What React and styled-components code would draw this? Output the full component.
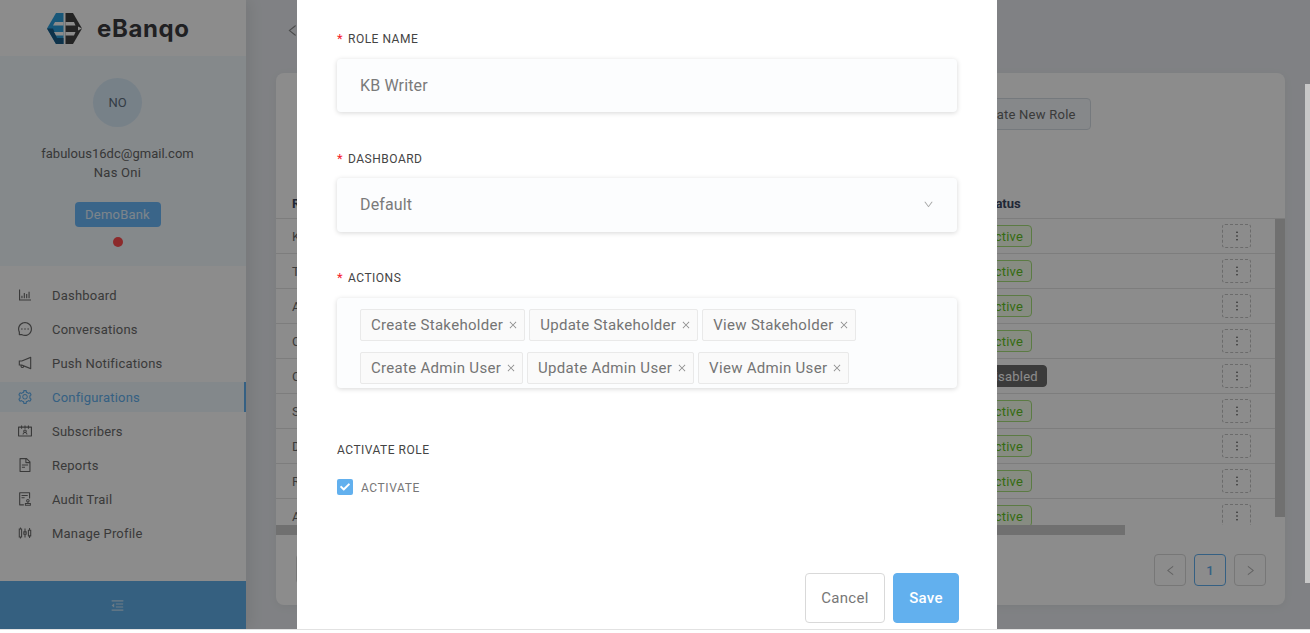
import React from "react";
import styled, { createGlobalStyle } from "styled-components";
import {
  AiOutlineBarChart,
  AiOutlineMessage,
  AiOutlineNotification,
  AiOutlineSetting,
  AiOutlineContacts,
  AiOutlineFileText,
  AiOutlineAudit,
  AiOutlineSliders,
  AiOutlineMenuFold,
  AiOutlineDown,
  AiOutlineClose,
  AiOutlineLeft,
  AiOutlineRight,
  AiOutlineMore,
} from "react-icons/ai";
import { FaCheck } from "react-icons/fa";

const GlobalStyle = createGlobalStyle`
  html, body {
    margin: 0;
    padding: 0;
    height: 100%;
    background: #fff;
    overflow: hidden;
  }
  * { box-sizing: border-box; }
  body, button {
    font-family: "Roboto", "Liberation Sans", sans-serif;
  }
`;

const Stage = styled.div`
  position: relative;
  display: flex;
  width: 1310px;
  height: 630px;
  overflow: hidden;
  border-bottom: 1px solid #e2e2e2;
  background: #e9ecf0;
`;

const Sidebar = styled.aside`
  display: flex;
  flex-direction: column;
  flex: 0 0 246px;
  background: #fff;
  box-shadow: 4px 0 14px rgba(0, 0, 0, 0.08);
`;

const Brand = styled.div`
  display: flex;
  align-items: center;
  gap: 15px;
  height: 56px;
  padding-left: 47px;
`;

const BrandName = styled.span`
  font-family: "Inter", sans-serif;
  font-size: 24px;
  font-weight: 700;
  letter-spacing: 0.6px;
  color: #3b3b3f;
`;

const Profile = styled.div`
  display: flex;
  flex-direction: column;
  align-items: center;
  height: 210px;
  padding: 22px 11px 0 0;
  background: #f2f9fe;
`;

const Avatar = styled.div`
  display: flex;
  align-items: center;
  justify-content: center;
  width: 49px;
  height: 49px;
  border-radius: 50%;
  background: #d9ebf8;
  color: #5f6f80;
  font-size: 13px;
`;

const Email = styled.div`
  margin-top: 17px;
  font-size: 13px;
  line-height: 19px;
  letter-spacing: 0.02px;
  color: #666;
`;

const Name = styled(Email)`
  margin-top: 0;
  letter-spacing: 0.25px;
`;

const BankButton = styled.div`
  display: flex;
  align-items: center;
  justify-content: center;
  width: 86px;
  height: 25px;
  margin-top: 20px;
  border-radius: 4px;
  background: #6bb8fa;
  color: #e3f2fd;
  font-size: 13px;
  letter-spacing: 0.2px;
`;

const StatusDot = styled.span`
  width: 10px;
  height: 10px;
  margin-top: 10px;
  border-radius: 50%;
  background: #ff4d4f;
`;

const Nav = styled.nav`
  display: flex;
  flex-direction: column;
  gap: 4px;
  padding-top: 14px;
`;

const NavItem = styled.div`
  display: flex;
  align-items: center;
  gap: 19px;
  height: 30px;
  padding-left: 17px;
  font-size: 13px;
  letter-spacing: 0.2px;
  color: ${(p) => (p.$active ? "#62b0ee" : "#6b6b6b")};
  background: ${(p) => (p.$active ? "#eef7fd" : "transparent")};
  border-right: 2px solid ${(p) => (p.$active ? "#62b0ee" : "transparent")};

  svg {
    font-size: 16px;
    flex-shrink: 0;
  }
`;

const Collapse = styled.div`
  display: flex;
  align-items: center;
  justify-content: center;
  height: 48px;
  margin-top: auto;
  padding-right: 11px;
  background: #62b0e9;
  color: #c8e2f5;
  font-size: 15px;
`;

const Main = styled.main`
  flex: 1;
  display: flex;
  flex-direction: column;
  padding: 0 25px 24px 30px;
`;

const BackRow = styled.div`
  display: flex;
  align-items: center;
  height: 73px;
  padding-bottom: 12px;
  margin-left: 9px;
  color: #8a8a8a;
  font-size: 15px;
`;

const Card = styled.section`
  position: relative;
  display: flex;
  flex-direction: column;
  height: 532px;
  border-radius: 8px;
  background: #fff;
  box-shadow: 0 2px 10px rgba(0, 0, 0, 0.05);
`;

const CardHead = styled.div`
  display: flex;
  justify-content: flex-end;
  height: 116px;
  padding: 25px 194px 0 0;
`;

const NewRole = styled.button`
  width: 130px;
  height: 32px;
  padding: 0;
  border: 1px solid #d6dde4;
  border-radius: 4px;
  background: #f4f8fc;
  color: #6b6b6b;
  font-size: 13px;
  letter-spacing: 0.25px;
`;

const TableHead = styled.div`
  display: flex;
  align-items: center;
  height: 30px;
  padding-left: 16px;
  border-bottom: 1px solid #e4e4e4;
  font-size: 13px;
  font-weight: 700;
  color: #3d4a63;
`;

const TableBody = styled.div`
  height: 306px;
  overflow: hidden;
`;

const Row = styled.div`
  display: flex;
  align-items: center;
  width: 999px;
  height: 35px;
  padding: 0 24px 0 16px;
  border-bottom: 1px solid #e4e4e4;
  font-size: 13px;
  color: #6e6e6e;
`;

const NameCell = styled.div`
  flex: 1;
`;

const HeadStatus = styled.div`
  flex: 0 0 302px;
`;

const StatusCell = styled.div`
  flex: 0 0 245px;
`;

const Tag = styled.span`
  display: inline-flex;
  align-items: center;
  height: 22px;
  padding: 0 8px;
  border-radius: 4px;
  border: 1px solid ${(p) => (p.$off ? "#6c6c6c" : "#a6e07a")};
  background: ${(p) => (p.$off ? "#6c6c6c" : "#f6ffed")};
  color: ${(p) => (p.$off ? "#fff" : "#62c422")};
  font-size: 13px;
  letter-spacing: 0.2px;
`;

const Kebab = styled.span`
  display: flex;
  align-items: center;
  justify-content: center;
  flex: 0 0 29px;
  height: 24px;
  border: 1px dashed #c4c4c4;
  border-radius: 3px;
  color: #333;
  font-size: 14px;
`;

const ScrollY = styled.span`
  position: absolute;
  top: 146px;
  right: 0;
  width: 10px;
  height: 298px;
  background: #ccc;
`;

const ScrollX = styled.span`
  position: absolute;
  top: 452px;
  left: 0;
  width: 849px;
  height: 10px;
  background: #ccc;
`;

const Pager = styled.div`
  display: flex;
  align-items: center;
  gap: 8px;
  margin-top: 29px;
  padding: 0 19px 0 20px;
`;

const ExportBox = styled.div`
  align-self: flex-start;
  width: 120px;
  height: 30px;
  margin-right: auto;
  border: 1px solid #d9d9d9;
  border-radius: 4px;
`;

const PageBtn = styled.span`
  display: flex;
  align-items: center;
  justify-content: center;
  width: 32px;
  height: 32px;
  border: 1px solid ${(p) => (p.$on ? "#62b0ee" : "#d9d9d9")};
  border-radius: 4px;
  color: ${(p) => (p.$on ? "#62b0ee" : "#b5b5b5")};
  font-size: 13px;
  font-weight: ${(p) => (p.$on ? 500 : 400)};
`;

const Overlay = styled.div`
  position: absolute;
  inset: 0;
  display: flex;
  justify-content: center;
  padding-right: 16px;
  background: rgba(0, 0, 0, 0.45);
`;

const PageThumb = styled.span`
  position: absolute;
  top: 84px;
  right: 0;
  width: 5px;
  height: 499px;
  background: #c8c8c8;
`;

const Modal = styled.div`
  display: flex;
  flex-direction: column;
  width: 700px;
  height: 100%;
  padding: 28px 38px 0 40px;
  background: #fff;
`;

const Field = styled.div`
  width: 620px;
  margin-bottom: 35.5px;
`;

const Label = styled.label`
  display: block;
  height: 20px;
  margin-bottom: 10.5px;
  font-size: 12px;
  line-height: 22px;
  letter-spacing: 0.5px;
  color: #444;
  text-transform: uppercase;

  &::before {
    content: "*";
    display: inline-block;
    width: 11px;
    color: #f5222d;
    font-size: 13px;
  }
`;

const InputBox = styled.div`
  display: flex;
  align-items: center;
  justify-content: space-between;
  height: 53.5px;
  padding: 0 23px 0 23px;
  border-radius: 4px;
  background: #fcfdfe;
  box-shadow: 0 1px 5px rgba(0, 0, 0, 0.16);
  color: #7a7a7a;
  font-size: 16px;
  letter-spacing: 0.15px;

  svg {
    font-size: 11px;
    color: #a8a8a8;
  }
`;

const TagBox = styled.div`
  display: flex;
  flex-wrap: wrap;
  align-content: flex-start;
  gap: 11px 4px;
  height: 90.5px;
  padding: 11px 0 0 23px;
  border-radius: 4px;
  background: #fcfdfe;
  box-shadow: 0 1px 5px rgba(0, 0, 0, 0.16);
`;

const ActionTag = styled.span`
  display: inline-flex;
  align-items: center;
  gap: 5px;
  height: 32px;
  padding: 1px 6px 0 10px;
  border: 1px solid #e9e9e9;
  border-radius: 2px;
  background: #fafafa;
  color: #747474;
  font-size: 15px;
  letter-spacing: 0.3px;

  svg {
    font-size: 10px;
    color: #8c8c8c;
  }
`;

const GroupTitle = styled.div`
  height: 20px;
  margin-top: 15px;
  font-size: 12px;
  line-height: 22px;
  letter-spacing: 0.5px;
  color: #444;
`;

const CheckRow = styled.div`
  display: flex;
  align-items: center;
  gap: 8px;
  margin-top: 20.5px;
  font-size: 12px;
  letter-spacing: 0.6px;
  color: #777;
`;

const CheckText = styled.span`
  padding-top: 2px;
`;

const CheckBox = styled.span`
  display: flex;
  align-items: center;
  justify-content: center;
  width: 16px;
  height: 16px;
  border-radius: 2px;
  background: #62b0ee;
  color: #fff;
  font-size: 10px;
`;

const Footer = styled.div`
  display: flex;
  justify-content: flex-end;
  gap: 8px;
  margin-top: 78px;
`;

const CancelButton = styled.button`
  width: 80px;
  height: 50px;
  border: 1px solid #d9d9d9;
  border-radius: 4px;
  background: #fff;
  color: #777;
  font-size: 15px;
  letter-spacing: 0.3px;
`;

const SaveButton = styled(CancelButton)`
  width: 66px;
  border-color: #62b0ee;
  background: #62b0ee;
  color: #fff;
  font-weight: 500;
`;

const Logo = () => (
  <svg width="35" height="31" viewBox="0 0 35 31">
    <path d="M16.500 0H9L0 15.500 9 31h7.500z" fill="#2d9fdc" />
    <path d="M0 15.500 9 31h7.500v-6H10l-4-9.500z" fill="#1b5b88" />
    <path d="M8 9h8.500v3.500H6zM7 19h9.500v3.500H9z" fill="#fff" />
    <path d="M18.500 0H26l9 15.500L26 31h-7.500z" fill="#404040" />
    <path d="M18.500 9H27l1.500 3.500h-10zM18.500 19h10L27 22.500h-8.500z" fill="#fff" />
    <path d="M35 15.500 31 13.500v4z" fill="#fff" />
  </svg>
);

const menu = [
  { label: "Dashboard", Icon: AiOutlineBarChart },
  { label: "Conversations", Icon: AiOutlineMessage },
  { label: "Push Notifications", Icon: AiOutlineNotification },
  { label: "Configurations", Icon: AiOutlineSetting, active: true },
  { label: "Subscribers", Icon: AiOutlineContacts },
  { label: "Reports", Icon: AiOutlineFileText },
  { label: "Audit Trail", Icon: AiOutlineAudit },
  { label: "Manage Profile", Icon: AiOutlineSliders },
];

const roles = [
  { name: "KB Writer" },
  { name: "Team" },
  { name: "Admin" },
  { name: "Care" },
  { name: "Content", off: true },
  { name: "Support" },
  { name: "Dev" },
  { name: "Review" },
  { name: "Audit" },
];

const actions = [
  "Create Stakeholder",
  "Update Stakeholder",
  "View Stakeholder",
  "Create Admin User",
  "Update Admin User",
  "View Admin User",
];

export default function App() {
  return (
    <>
      <GlobalStyle />
      <Stage>
        <Sidebar>
          <Brand>
            <Logo />
            <BrandName>eBanqo</BrandName>
          </Brand>
          <Profile>
            <Avatar>NO</Avatar>
            <Email>fabulous16dc@gmail.com</Email>
            <Name>Nas Oni</Name>
            <BankButton>DemoBank</BankButton>
            <StatusDot />
          </Profile>
          <Nav>
            {menu.map(({ label, Icon, active }) => (
              <NavItem key={label} $active={active}>
                <Icon />
                {label}
              </NavItem>
            ))}
          </Nav>
          <Collapse>
            <AiOutlineMenuFold />
          </Collapse>
        </Sidebar>

        <Main>
          <BackRow>
            <AiOutlineLeft />
          </BackRow>
          <Card>
            <CardHead>
              <NewRole>Create New Role</NewRole>
            </CardHead>
            <TableHead>
              <NameCell>Role</NameCell>
              <HeadStatus>Status</HeadStatus>
            </TableHead>
            <TableBody>
              {roles.map((r) => (
                <Row key={r.name}>
                  <NameCell>{r.name}</NameCell>
                  <StatusCell>
                    <Tag $off={r.off}>{r.off ? "Disabled" : "Active"}</Tag>
                  </StatusCell>
                  <Kebab>
                    <AiOutlineMore />
                  </Kebab>
                </Row>
              ))}
            </TableBody>
            <ScrollY />
            <ScrollX />
            <Pager>
              <ExportBox />
              <PageBtn>
                <AiOutlineLeft />
              </PageBtn>
              <PageBtn $on>1</PageBtn>
              <PageBtn>
                <AiOutlineRight />
              </PageBtn>
            </Pager>
          </Card>
        </Main>

        <Overlay>
          <Modal>
            <Field>
              <Label>Role Name</Label>
              <InputBox>KB Writer</InputBox>
            </Field>
            <Field>
              <Label>Dashboard</Label>
              <InputBox>
                Default
                <AiOutlineDown />
              </InputBox>
            </Field>
            <Field>
              <Label>Actions</Label>
              <TagBox>
                {actions.map((a) => (
                  <ActionTag key={a}>
                    {a}
                    <AiOutlineClose />
                  </ActionTag>
                ))}
              </TagBox>
            </Field>
            <GroupTitle>ACTIVATE ROLE</GroupTitle>
            <CheckRow>
              <CheckBox>
                <FaCheck />
              </CheckBox>
              <CheckText>ACTIVATE</CheckText>
            </CheckRow>
            <Footer>
              <CancelButton>Cancel</CancelButton>
              <SaveButton>Save</SaveButton>
            </Footer>
          </Modal>
        </Overlay>
        <PageThumb />
      </Stage>
    </>
  );
}
